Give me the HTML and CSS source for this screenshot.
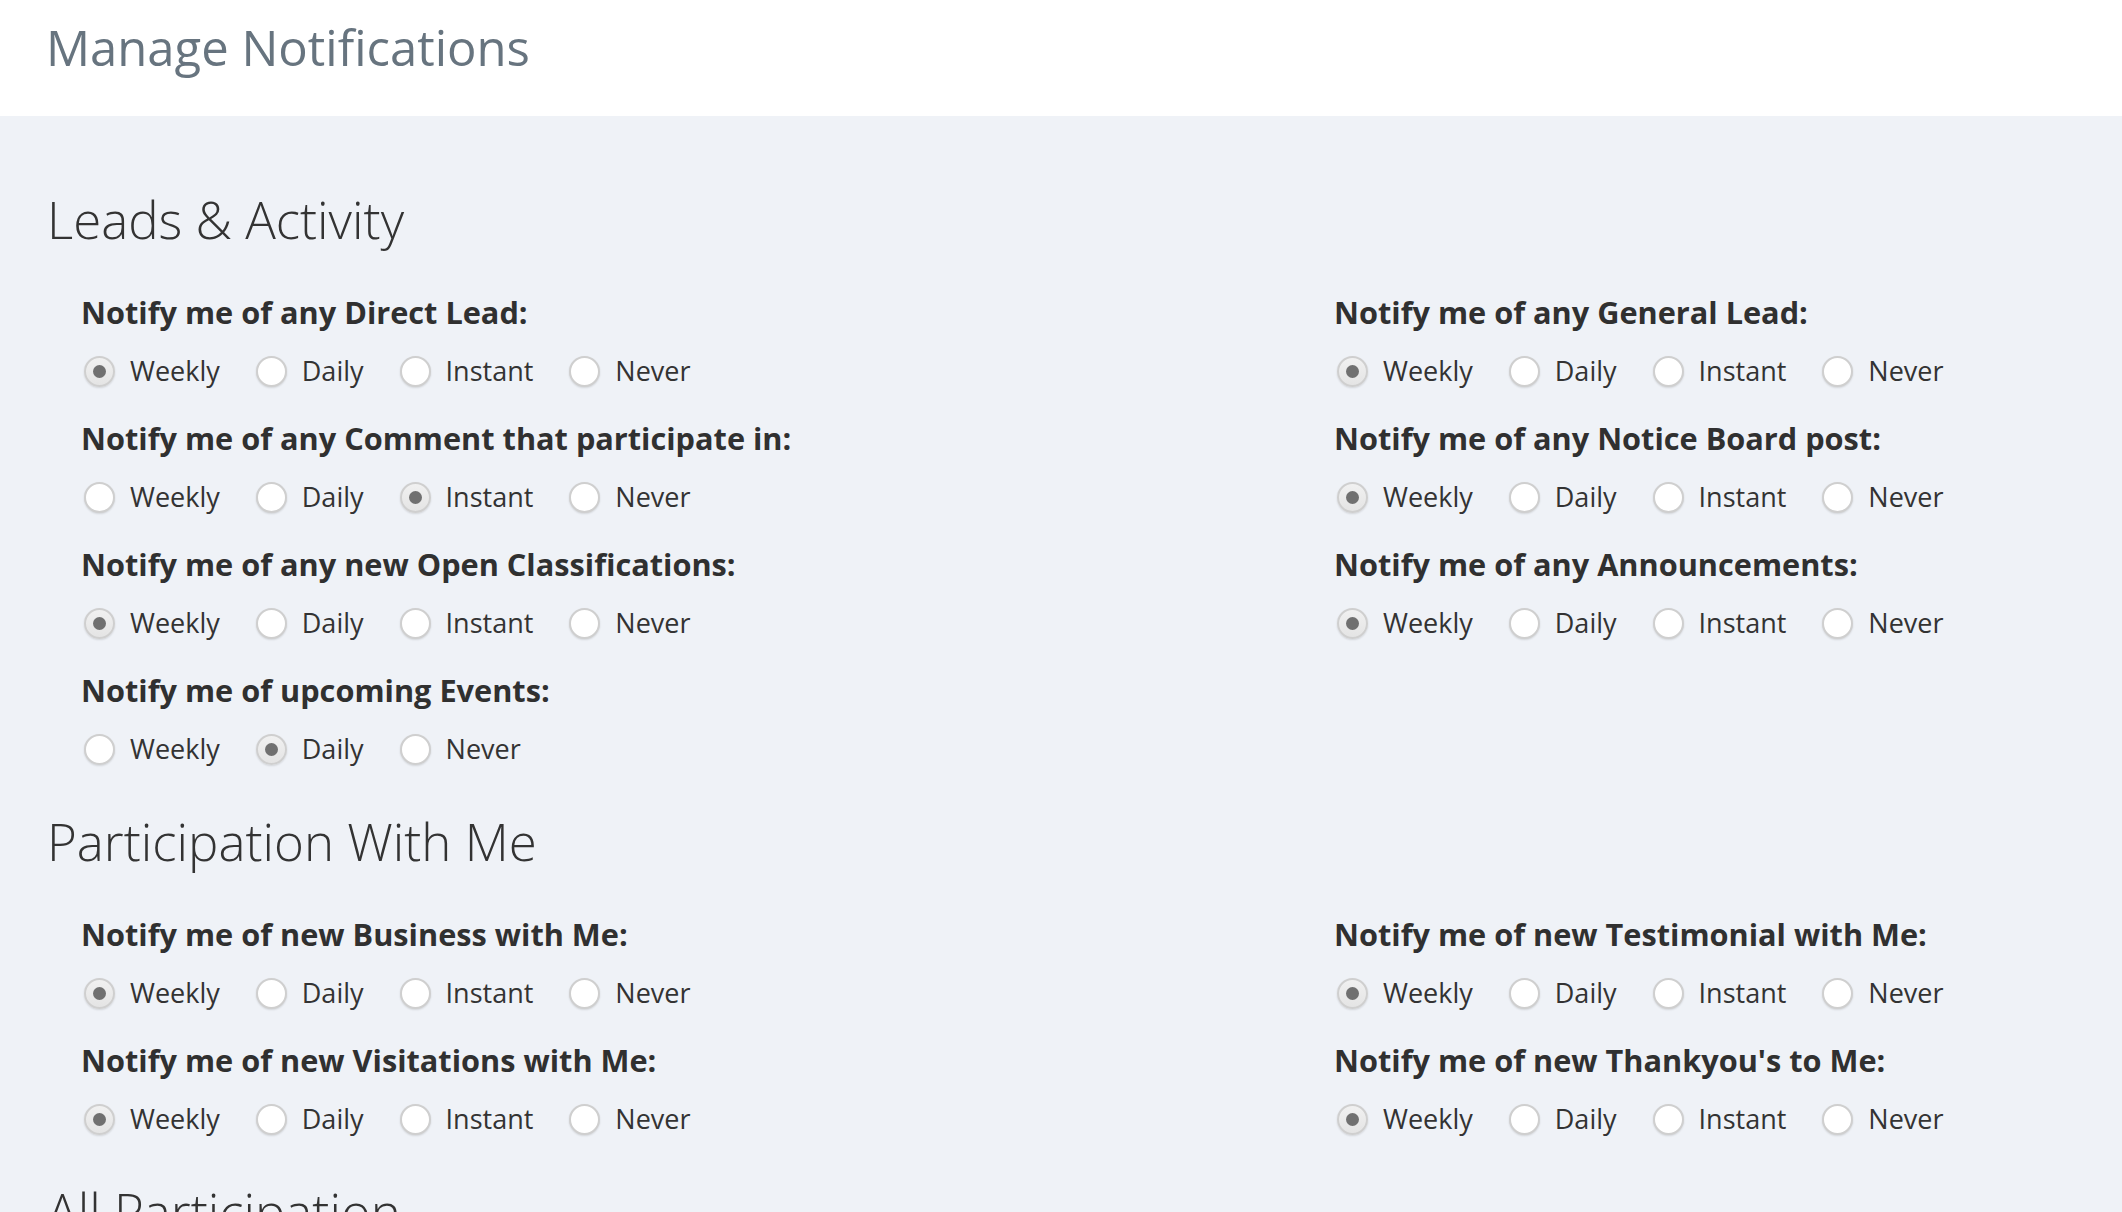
FILE: index.html
```html
<!DOCTYPE html>
<html lang="en">
<head>
<meta charset="utf-8">
<title>Manage Notifications</title>
<link rel="stylesheet" href="styles.css">
</head>
<body>
<header class="page-header">
  <h1 class="page-title">Manage Notifications</h1>
</header>
<main class="content">
  <section class="section">
    <h2 class="section-title">Leads &amp; Activity</h2>
    <div class="grid">
      <div class="item">
        <div class="item-label">Notify me of any Direct Lead:</div>
        <div class="options">
          <label class="opt"><input type="radio" name="q1" checked><span>Weekly</span></label>
          <label class="opt"><input type="radio" name="q1"><span>Daily</span></label>
          <label class="opt"><input type="radio" name="q1"><span>Instant</span></label>
          <label class="opt"><input type="radio" name="q1"><span>Never</span></label>
        </div>
      </div>
      <div class="item">
        <div class="item-label">Notify me of any General Lead:</div>
        <div class="options">
          <label class="opt"><input type="radio" name="q2" checked><span>Weekly</span></label>
          <label class="opt"><input type="radio" name="q2"><span>Daily</span></label>
          <label class="opt"><input type="radio" name="q2"><span>Instant</span></label>
          <label class="opt"><input type="radio" name="q2"><span>Never</span></label>
        </div>
      </div>
      <div class="item">
        <div class="item-label">Notify me of any Comment that participate in:</div>
        <div class="options">
          <label class="opt"><input type="radio" name="q3"><span>Weekly</span></label>
          <label class="opt"><input type="radio" name="q3"><span>Daily</span></label>
          <label class="opt"><input type="radio" name="q3" checked><span>Instant</span></label>
          <label class="opt"><input type="radio" name="q3"><span>Never</span></label>
        </div>
      </div>
      <div class="item">
        <div class="item-label">Notify me of any Notice Board post:</div>
        <div class="options">
          <label class="opt"><input type="radio" name="q4" checked><span>Weekly</span></label>
          <label class="opt"><input type="radio" name="q4"><span>Daily</span></label>
          <label class="opt"><input type="radio" name="q4"><span>Instant</span></label>
          <label class="opt"><input type="radio" name="q4"><span>Never</span></label>
        </div>
      </div>
      <div class="item">
        <div class="item-label">Notify me of any new Open Classifications:</div>
        <div class="options">
          <label class="opt"><input type="radio" name="q5" checked><span>Weekly</span></label>
          <label class="opt"><input type="radio" name="q5"><span>Daily</span></label>
          <label class="opt"><input type="radio" name="q5"><span>Instant</span></label>
          <label class="opt"><input type="radio" name="q5"><span>Never</span></label>
        </div>
      </div>
      <div class="item">
        <div class="item-label">Notify me of any Announcements:</div>
        <div class="options">
          <label class="opt"><input type="radio" name="q6" checked><span>Weekly</span></label>
          <label class="opt"><input type="radio" name="q6"><span>Daily</span></label>
          <label class="opt"><input type="radio" name="q6"><span>Instant</span></label>
          <label class="opt"><input type="radio" name="q6"><span>Never</span></label>
        </div>
      </div>
      <div class="item">
        <div class="item-label">Notify me of upcoming Events:</div>
        <div class="options">
          <label class="opt"><input type="radio" name="q7"><span>Weekly</span></label>
          <label class="opt"><input type="radio" name="q7" checked><span>Daily</span></label>
          <label class="opt"><input type="radio" name="q7"><span>Never</span></label>
        </div>
      </div>
    </div>
  </section>
  <section class="section">
    <h2 class="section-title">Participation With Me</h2>
    <div class="grid">
      <div class="item">
        <div class="item-label">Notify me of new Business with Me:</div>
        <div class="options">
          <label class="opt"><input type="radio" name="p1" checked><span>Weekly</span></label>
          <label class="opt"><input type="radio" name="p1"><span>Daily</span></label>
          <label class="opt"><input type="radio" name="p1"><span>Instant</span></label>
          <label class="opt"><input type="radio" name="p1"><span>Never</span></label>
        </div>
      </div>
      <div class="item">
        <div class="item-label">Notify me of new Testimonial with Me:</div>
        <div class="options">
          <label class="opt"><input type="radio" name="p2" checked><span>Weekly</span></label>
          <label class="opt"><input type="radio" name="p2"><span>Daily</span></label>
          <label class="opt"><input type="radio" name="p2"><span>Instant</span></label>
          <label class="opt"><input type="radio" name="p2"><span>Never</span></label>
        </div>
      </div>
      <div class="item">
        <div class="item-label">Notify me of new Visitations with Me:</div>
        <div class="options">
          <label class="opt"><input type="radio" name="p3" checked><span>Weekly</span></label>
          <label class="opt"><input type="radio" name="p3"><span>Daily</span></label>
          <label class="opt"><input type="radio" name="p3"><span>Instant</span></label>
          <label class="opt"><input type="radio" name="p3"><span>Never</span></label>
        </div>
      </div>
      <div class="item">
        <div class="item-label">Notify me of new Thankyou's to Me:</div>
        <div class="options">
          <label class="opt"><input type="radio" name="p4" checked><span>Weekly</span></label>
          <label class="opt"><input type="radio" name="p4"><span>Daily</span></label>
          <label class="opt"><input type="radio" name="p4"><span>Instant</span></label>
          <label class="opt"><input type="radio" name="p4"><span>Never</span></label>
        </div>
      </div>
    </div>
  </section>
  <section class="section">
    <h2 class="section-title">All Participation</h2>
  </section>
</main>
</body>
</html>
```

FILE: styles.css
```css
html, body {
  margin: 0;
  padding: 0;
}
body {
  background: #eff2f7;
  font-family: "Open Sans", "Liberation Sans", sans-serif;
  color: #333333;
  overflow: hidden;
  height: 1212px;
}
.page-header {
  background: #ffffff;
  height: 116px;
  box-sizing: border-box;
  padding: 19px 0 0 46px;
}
.page-title {
  margin: 0;
  font-size: 49px;
  line-height: 56px;
  font-weight: 400;
  color: #67747f;
}
.content {
  padding: 73px 0 0 47px;
}
.section + .section {
  margin-top: 42px;
}
.section-title {
  margin: 0 0 43px 0;
  font-size: 51px;
  line-height: 60px;
  font-weight: 300;
  color: #333333;
}
.grid {
  display: grid;
  grid-template-columns: 1253px 1fr;
  row-gap: 27px;
  padding-left: 34px;
}
.item-label {
  font-size: 30.7px;
  line-height: 40px;
  font-weight: 700;
  color: #303030;
  margin-bottom: 19px;
}
.options {
  display: flex;
  align-items: center;
  height: 40px;
  padding-left: 3px;
}
.opt {
  display: flex;
  align-items: center;
  margin-right: 36px;
  font-size: 27px;
  line-height: 40px;
}
.opt input {
  -webkit-appearance: none;
  appearance: none;
  margin: 0 15px 0 0;
  width: 31px;
  height: 31px;
  border-radius: 50%;
  border: 2px solid #cfcfcf;
  background: #ffffff;
  box-shadow: 0 1px 2px rgba(0, 0, 0, 0.12);
  box-sizing: border-box;
  display: grid;
  place-items: center;
}
.opt input:checked {
  background: linear-gradient(#f1f1f1, #e4e4e4);
}
.opt input:checked::after {
  content: "";
  width: 13px;
  height: 13px;
  border-radius: 50%;
  background: #707070;
}
```
